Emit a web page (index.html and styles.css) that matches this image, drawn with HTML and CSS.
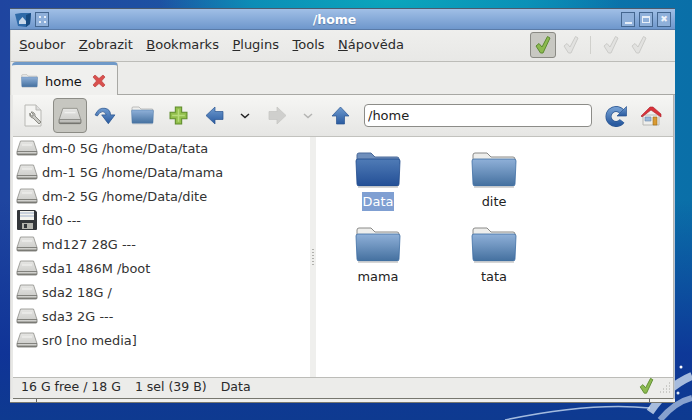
FILE: index.html
```html
<!DOCTYPE html>
<html lang="cs">
<head>
<meta charset="utf-8">
<title>/home</title>
<link rel="stylesheet" href="styles.css">
</head>
<body>
<svg class="defs" width="0" height="0" aria-hidden="true">
  <defs>
    <linearGradient id="gFolder" x1="0" y1="0" x2="0" y2="1"><stop offset="0" stop-color="#8fb0d8"/><stop offset="1" stop-color="#44709f"/></linearGradient>
    <linearGradient id="gFolderSel" x1="0" y1="0" x2="0" y2="1"><stop offset="0" stop-color="#4f7bb6"/><stop offset="1" stop-color="#234f96"/></linearGradient>
    <linearGradient id="gDriveTop" x1="0" y1="0" x2="0" y2="1"><stop offset="0" stop-color="#e6e6e4"/><stop offset="1" stop-color="#cfcfcc"/></linearGradient>
    <linearGradient id="gDriveBase" x1="0" y1="0" x2="0" y2="1"><stop offset="0" stop-color="#f8f8f6"/><stop offset="1" stop-color="#6f6f68"/></linearGradient>
    <linearGradient id="gBlue" x1="0" y1="0" x2="0" y2="1"><stop offset="0" stop-color="#6f9bd0"/><stop offset="1" stop-color="#2a5ba0"/></linearGradient>
    <symbol id="folder" viewBox="0 0 46 36">
      <path d="M2 10V3q0-2 2-2h12l4 4h22q2 0 2 2v5z" fill="#eeeeec" stroke="#8a8a88"/>
      <path d="M1 9q0-2 2-2h40q2 0 2 2l-1 23q0 2-2 2H4q-2 0-2-2z" fill="url(#gFolder)" stroke="#3f6ea4" stroke-width=".8"/>
      <path d="M3 35h40" stroke="#c8c8c8" stroke-width="1.5"/>
    </symbol>
    <symbol id="folderSel" viewBox="0 0 46 36">
      <path d="M2 10V3q0-2 2-2h12l4 4h22q2 0 2 2v5z" fill="#6f8fbc" stroke="#4a6a9a"/>
      <path d="M1 9q0-2 2-2h40q2 0 2 2l-1 23q0 2-2 2H4q-2 0-2-2z" fill="url(#gFolderSel)" stroke="#1f4a8c" stroke-width=".8"/>
      <path d="M3 35h40" stroke="#c8c8c8" stroke-width="1.5"/>
    </symbol>
    <symbol id="drive" viewBox="0 0 22 16">
      <path d="M4.500 1h13l3.500 10.500H1z" fill="url(#gDriveTop)" stroke="#8d8d88" stroke-width=".8"/>
      <path d="M1 11.500h20v2.500q0 1-1 1H2q-1 0-1-1z" fill="url(#gDriveBase)" stroke="#6f6f6a" stroke-width=".8"/>
      <path d="M6 5h10" stroke="#f4f4f2" stroke-width="1"/>
    </symbol>
    <symbol id="check" viewBox="0 0 16 20">
      <path d="M1 11l3-2.500 3 3.500L12.500 1.500 15 3 8 18H5.500z"/>
    </symbol>
  </defs>
</svg>

<div class="desktop">
  <svg class="streaks" viewBox="0 0 692 420" width="692" height="420" aria-hidden="true">
    <path d="M505 420Q590 402 650 408" fill="none" stroke="#c9dcf2" stroke-width="1.500" opacity=".8"/>
    <path d="M650 412Q668 386 692 376" fill="none" stroke="#dbe8f6" stroke-width="8" opacity=".75"/>
    <path d="M660 420Q675 402 692 398" fill="none" stroke="#dbe8f6" stroke-width="6" opacity=".6"/>
    <circle cx="681" cy="367" r="1.500" fill="#fff"/>
    <circle cx="678" cy="393" r="1.500" fill="#dfeafa"/>
  </svg>

  <main class="window">
    <header class="titlebar">
      <svg class="app-icon" viewBox="0 0 16 16" width="16" height="16" aria-hidden="true">
        <path d="M0 3l6-1 10 0-1 11-4 3-8-1z" fill="#2f6aa8"/>
        <path d="M11 16l4-3 1-11-5 2z" fill="#174a80"/>
        <path d="M4 10l3.500-4 3.500 4v3H4z" fill="#c8d8ea"/>
      </svg>
      <span class="wbtn"><i class="dots"></i></span>
      <h1 class="title">/home</h1>
      <span class="wbtn wbtn-right"><i class="glyph-min"></i></span>
      <span class="wbtn wbtn-right"><i class="glyph-max"></i></span>
      <span class="wbtn wbtn-right"><i class="glyph-close">✖</i></span>
    </header>

    <nav class="menubar">
      <a class="menu"><u>S</u>oubor</a>
      <a class="menu"><u>Z</u>obrazit</a>
      <a class="menu"><u>B</u>ookmarks</a>
      <a class="menu"><u>P</u>lugins</a>
      <a class="menu"><u>T</u>ools</a>
      <a class="menu"><u>N</u>ápověda</a>
      <div class="checks">
        <span class="check-btn is-on"><svg class="ck ck-green" width="16" height="20"><use href="#check"/></svg></span>
        <span class="check-btn"><svg class="ck ck-gray" width="16" height="20"><use href="#check"/></svg></span>
        <span class="sep"></span>
        <span class="check-btn"><svg class="ck ck-gray" width="16" height="20"><use href="#check"/></svg></span>
        <span class="check-btn"><svg class="ck ck-gray" width="16" height="20"><use href="#check"/></svg></span>
      </div>
    </nav>

    <div class="tabbar">
      <div class="tab">
        <svg width="17" height="14"><use href="#folder"/></svg>
        <span class="tab-label">home</span>
        <svg class="tab-close" viewBox="0 0 14 14" width="14" height="14" aria-hidden="true">
          <path d="M1 3l2-2 4 3.500L11 1l2 2-3.500 4L13 11l-2 2-4-3.500L3 13l-2-2 3.500-4z" fill="#d9504e" stroke="#b53533" stroke-width=".6"/>
        </svg>
      </div>
      <div class="tab-rest"></div>
    </div>

    <div class="panel">
      <div class="toolbar">
        <span class="tool t-doc">
          <svg viewBox="0 0 20 24" width="20" height="24" aria-hidden="true">
            <path d="M2 1h11l5 5v16H2z" fill="#f4f4f2" stroke="#b8b8b4"/>
            <path d="M13 1v5h5" fill="#ddd" stroke="#b8b8b4"/>
            <path d="M7 9a3.500 3.500 0 0 0 3 5l6 6 2-2-6-6a3.500 3.500 0 0 0-4-4l2 2v2H8z" fill="#c9c9c5" stroke="#77776f" stroke-width=".8"/>
          </svg>
        </span>
        <span class="tool t-drive"><svg width="24" height="18"><use href="#drive"/></svg></span>
        <span class="tool t-std">
          <svg viewBox="0 0 20 18" width="22" height="20" aria-hidden="true">
            <path d="M1 8q3-7 9-6 5 1 5 6h4l-6 8-6-8h4q-1-3-3-3-3 0-5 4z" fill="url(#gBlue)" stroke="#2a5590" stroke-width=".7"/>
          </svg>
        </span>
        <span class="tool t-folder"><svg width="23" height="19"><use href="#folder"/></svg></span>
        <span class="tool t-std">
          <svg viewBox="0 0 18 18" width="19" height="19" aria-hidden="true">
            <path d="M6 1h6v5h5v6h-5v5H6v-5H1V6h5z" fill="#92bf4c" stroke="#5e8c2a"/>
            <path d="M9 3v12M3 9h12" stroke="#b8dc7c" stroke-width="1.500"/>
          </svg>
        </span>
        <span class="tool t-std">
          <svg viewBox="0 0 19 19" width="19" height="19" aria-hidden="true">
            <path d="M1 9.500L10 1v4.500h8v8h-8V18z" fill="url(#gBlue)" stroke="#2a5590" stroke-width=".7"/>
          </svg>
        </span>
        <span class="tool t-chev"><svg viewBox="0 0 10 6" width="10" height="6" aria-hidden="true"><path d="M1 1l4 3.500L9 1" fill="none" stroke="#222" stroke-width="1.500"/></svg></span>
        <span class="tool t-fwd">
          <svg viewBox="0 0 19 19" width="19" height="19" aria-hidden="true">
            <path d="M18 9.500L9 1v4.500H1v8h8V18z" fill="#cfcfcd" stroke="#c4c4c2" stroke-width=".7"/>
          </svg>
        </span>
        <span class="tool t-chev2"><svg viewBox="0 0 10 6" width="10" height="6" aria-hidden="true"><path d="M1 1l4 3.500L9 1" fill="none" stroke="#b4b4b2" stroke-width="1.500"/></svg></span>
        <span class="tool t-up">
          <svg viewBox="0 0 19 19" width="19" height="19" aria-hidden="true">
            <path d="M9.500 1L18 10h-4.500v8h-8v-8H1z" fill="url(#gBlue)" stroke="#2a5590" stroke-width=".7"/>
          </svg>
        </span>
        <input class="path" type="text" value="/home" aria-label="Path">
        <span class="tool t-reload">
          <svg viewBox="0 0 22 22" width="22" height="22" aria-hidden="true">
            <path d="M17 7A7.500 7.500 0 1 0 17 16" fill="none" stroke="#2a5590" stroke-width="6"/>
            <path d="M17 7A7.500 7.500 0 1 0 17 16" fill="none" stroke="url(#gBlue)" stroke-width="4.600"/>
            <path d="M21.500 1.500V11H12z" fill="url(#gBlue)" stroke="#2a5590" stroke-width=".7"/>
          </svg>
        </span>
        <span class="tool t-home">
          <svg viewBox="0 0 22 20" width="22" height="20" aria-hidden="true">
            <path d="M3 9h16v10H3z" fill="#eeeeec" stroke="#b8b8b4"/>
            <path d="M1 10L10 1h3l8 7v3l-10-7-9 7z" fill="#d9323a" stroke="#a82028" stroke-width=".6"/>
            <path d="M5 11h6v4H5z" fill="#9cb8d8" stroke="#6c8cb0" stroke-width=".6"/>
            <path d="M13 11h4v8h-4z" fill="#d99a32" stroke="#a06c14" stroke-width=".6"/>
          </svg>
        </span>
      </div>

      <div class="panes">
        <aside class="devices">
          <div class="dev"><svg class="dev-icon" width="22" height="16"><use href="#drive"/></svg>dm-0 5G /home/Data/tata</div>
          <div class="dev"><svg class="dev-icon" width="22" height="16"><use href="#drive"/></svg>dm-1 5G /home/Data/mama</div>
          <div class="dev"><svg class="dev-icon" width="22" height="16"><use href="#drive"/></svg>dm-2 5G /home/Data/dite</div>
          <div class="dev">
            <svg class="dev-icon" viewBox="0 0 22 22" width="22" height="22" aria-hidden="true">
              <path d="M1 2q0-1 1-1h17l2 2v17q0 1-1 1H2q-1 0-1-1z" fill="#33363a"/>
              <path d="M4 2h14v9H4z" fill="#f4f4ee"/>
              <path d="M4 4h14M4 7h14" stroke="#8aa0c0" stroke-width=".8"/>
              <path d="M6 14h11v6H6z" fill="#b4b4ae"/>
              <path d="M8 15h3v4H8z" fill="#33363a"/>
            </svg>fd0 ---</div>
          <div class="dev"><svg class="dev-icon" width="22" height="16"><use href="#drive"/></svg>md127 28G ---</div>
          <div class="dev"><svg class="dev-icon" width="22" height="16"><use href="#drive"/></svg>sda1 486M /boot</div>
          <div class="dev"><svg class="dev-icon" width="22" height="16"><use href="#drive"/></svg>sda2 18G /</div>
          <div class="dev"><svg class="dev-icon" width="22" height="16"><use href="#drive"/></svg>sda3 2G ---</div>
          <div class="dev"><svg class="dev-icon" width="22" height="16"><use href="#drive"/></svg>sr0 [no media]</div>
        </aside>
        <div class="splitter"><i></i></div>
        <section class="files">
          <div class="file"><svg width="46" height="36"><use href="#folderSel"/></svg><span class="fname is-selected">Data</span></div>
          <div class="file"><svg width="46" height="36"><use href="#folder"/></svg><span class="fname">dite</span></div>
          <div class="file"><svg width="46" height="36"><use href="#folder"/></svg><span class="fname">mama</span></div>
          <div class="file"><svg width="46" height="36"><use href="#folder"/></svg><span class="fname">tata</span></div>
        </section>
      </div>

      <footer class="statusbar">
        <span class="st st-free">16 G free / 18 G</span>
        <span class="st">1 sel (39 B)</span>
        <span class="st">Data</span>
        <svg class="ck ck-green st-check" width="15" height="18"><use href="#check"/></svg>
        <svg class="grip" viewBox="0 0 12 12" width="12" height="12" aria-hidden="true">
          <path d="M10 1h1M7 4h1M10 4h1M4 7h1M7 7h1M10 7h1M1 10h1M4 10h1M7 10h1M10 10h1" stroke="#a8a8a4" stroke-width="1"/>
        </svg>
      </footer>
    </div>

    <div class="frame-bottom"><i class="hl hl-left"></i><i class="hl hl-mid"></i></div>
  </main>
</div>
</body>
</html>
```

FILE: styles.css
```css
* { box-sizing: border-box; }
html, body { margin: 0; height: 100%; overflow: hidden; }
body { font-family: "DejaVu Sans", sans-serif; font-size: 13px; color: #2e3436; }
.defs { display: block; }

.desktop {
  position: relative;
  width: 692px;
  height: 420px;
  padding: 8px 0 0 10px;
  background:
    radial-gradient(ellipse 230px 60px at 390px 0, #0aa6bc 0%, rgba(10,150,185,.85) 60%, rgba(10,130,180,0) 100%),
    linear-gradient(90deg, #1f45a0 0%, #1e4fa2 20%, #1a62a8 45%, #0b76ac 80%, #0a6fa8 100%);
}
.desktop::before {
  content: "";
  position: absolute;
  left: 0; right: 0; top: 200px; bottom: 0;
  background: linear-gradient(180deg, rgba(14,50,150,0) 0%, rgba(14,50,150,.9) 70%, #0e3a90 100%);
}
.streaks { position: absolute; left: 0; top: 0; }

.window {
  position: relative;
  width: 665px;
  height: 395px;
  display: flex;
  flex-direction: column;
  border-top: 1px solid #4c5a6c;
  background: #e8e8e6;
  box-shadow: -1px 0 0 #b8c4d4 inset, 1px 0 0 #d8d8d8 inset;
}

.titlebar {
  height: 21px;
  flex: none;
  display: flex;
  align-items: center;
  padding: 0 4px 0 5px;
  gap: 3px;
  background: linear-gradient(180deg, #a0bfe6 0%, #6e97cc 100%);
  border-bottom: 1px solid #5a7ba8;
}
.app-icon { flex: none; margin-right: 1px; }
.wbtn {
  width: 14px;
  height: 15px;
  flex: none;
  border: 1px solid #44668f;
  background: #8fb0da;
  display: flex;
  align-items: center;
  justify-content: center;
}
.wbtn-right { margin-left: 1px; }
.dots {
  width: 7px; height: 7px;
  background:
    linear-gradient(#e6eef8,#e6eef8) 0 0/2px 2px no-repeat,
    linear-gradient(#e6eef8,#e6eef8) 5px 0/2px 2px no-repeat,
    linear-gradient(#e6eef8,#e6eef8) 0 5px/2px 2px no-repeat,
    linear-gradient(#e6eef8,#e6eef8) 5px 5px/2px 2px no-repeat;
}
.glyph-min { width: 7px; height: 2px; background: #e6eef8; margin-top: 7px; }
.glyph-max { width: 8px; height: 7px; border: 1px solid #e6eef8; border-top-width: 2px; }
.glyph-close { font-style: normal; font-size: 9px; line-height: 1; color: #eef3fa; }
.title {
  flex: 1;
  margin: 0;
  text-align: center;
  font-size: 12.500px;
  font-weight: bold;
  color: #fff;
  text-shadow: 0 1px 1px #5a7ba8;
}

.menubar {
  height: 32px;
  flex: none;
  display: flex;
  align-items: center;
  padding: 0 0 2px 8.300px;
  gap: 13.500px;
  background: linear-gradient(180deg, #efefed 0%, #e8e8e6 100%);
  border-bottom: 1px solid #bcbcb8;
  border-left: 1px solid #d0d0cc;
  color: #2a2a2a;
}
.menu { white-space: nowrap; }
.checks { margin-left: auto; display: flex; align-items: center; height: 30px; padding-right: 21px; }
.check-btn {
  width: 26px; height: 26px;
  display: flex; align-items: center; justify-content: center;
  border: 1px solid transparent;
  border-radius: 3px;
  margin-right: 2px;
}
.check-btn.is-on { background: #c8c8c2; border-color: #8a8a84; margin-right: 2px; }
.sep { width: 1px; height: 18px; background: #d0d0cc; margin: 0 7px 0 4px; }
.ck-green { fill: #8cba50; stroke: #5c8a30; stroke-width: 1; }
.ck-gray { fill: #e2e2e0; stroke: #cbcbc8; stroke-width: 1; }

.tabbar {
  height: 33px;
  flex: none;
  display: flex;
  background: #ececea;
  border-left: 1px solid #d0d0cc;
}
.tab {
  width: 106px;
  margin-left: 1px;
  display: flex;
  align-items: center;
  padding: 2px 0 0 9px;
  background: #f0f0ee;
  border-top: 3px solid #6f99c8;
  border-right: 1px solid #a8a8a4;
  border-radius: 4px 4px 0 0;
  color: #111;
}
.tab-label { margin-left: 7px; font-size: 13px; }
.tab-close { margin-left: 10px; }
.tab-rest { flex: 1; border-bottom: 1px solid #a8a8a4; }

.panel {
  flex: 1;
  min-height: 0;
  display: flex;
  flex-direction: column;
  margin: 0 1px 0 3px;
  border-right: 1px solid #b4b4b0;
  background: #fff;
}
.toolbar {
  height: 42px;
  flex: none;
  display: flex;
  align-items: center;
  padding-left: 2px;
  background: linear-gradient(180deg, #f6f6f4 0%, #e6e6e4 100%);
  border-bottom: 1px solid #c2c2be;
}
.tool { height: 35px; flex: none; display: flex; align-items: center; justify-content: center; }
.t-doc { width: 36px; }
.t-drive {
  width: 34px;
  margin: 0 0 0 2px;
  background: #c6c6c0;
  border: 1px solid #8c8c86;
  border-radius: 4px;
}
.t-std { width: 36px; }
.t-folder { width: 36px; margin-left: 1px; }
.t-chev { width: 26px; }
.t-fwd { width: 38px; }
.t-chev2 { width: 24px; }
.t-up { width: 40px; }
.t-reload { width: 48px; }
.t-home { width: 22px; }
.path {
  width: 228px;
  height: 23px;
  flex: none;
  margin-left: 4px;
  padding: 0 3px;
  border: 1px solid #8c8c88;
  border-radius: 4px;
  background: #fff;
  font: 13px "DejaVu Sans", sans-serif;
  color: #222;
}

.panes { flex: 1; min-height: 0; display: flex; }
.devices { width: 297px; flex: none; background: #fff; font-size: 12.900px; }
.dev {
  height: 24px;
  display: flex;
  align-items: center;
  padding: 0 0 2px 3px;
  color: #333;
  white-space: nowrap;
}
.dev-icon { flex: none; margin-right: 4px; }
.splitter {
  width: 6px;
  flex: none;
  background: #efefed;
  display: flex;
  align-items: center;
  justify-content: center;
}
.splitter i {
  width: 2px; height: 16px;
  background: repeating-linear-gradient(180deg, #b0b0ac 0 1px, transparent 1px 3px);
}
.files {
  flex: 1;
  display: grid;
  grid-template-columns: 116px 116px;
  grid-auto-rows: 75px;
  align-content: start;
  padding: 15px 0 0 4px;
  background: #fff;
}
.file { display: flex; flex-direction: column; align-items: center; }
.file svg { flex: none; }
.fname { margin-top: 4px; height: 19px; line-height: 19px; padding: 0 1px; color: #222; font-size: 12.900px; }
.fname.is-selected { background: #7f9fd2; color: #fff; }

.statusbar {
  height: 22px;
  flex: none;
  display: flex;
  align-items: center;
  padding: 0 0 4px 8px;
  background: #ececea;
  border-top: 1px solid #bcbcb8;
  border-bottom: 1px solid #77776f;
  color: #2a2a2a;
  font-size: 12.500px;
}
.st { margin-right: 14px; white-space: nowrap; }
.st-check { margin-left: auto; margin-right: 5px; }
.grip { margin-right: 2px; align-self: flex-end; }

.frame-bottom {
  height: 4px;
  flex: none;
  display: flex;
  background: #f0f0ee;
  border-bottom: 1px solid #77776f;
}
.hl { display: block; width: 1px; background: #666; flex: none; }
.hl-left { margin-left: 26px; }
.hl-mid { margin-left: 612px; }
```
